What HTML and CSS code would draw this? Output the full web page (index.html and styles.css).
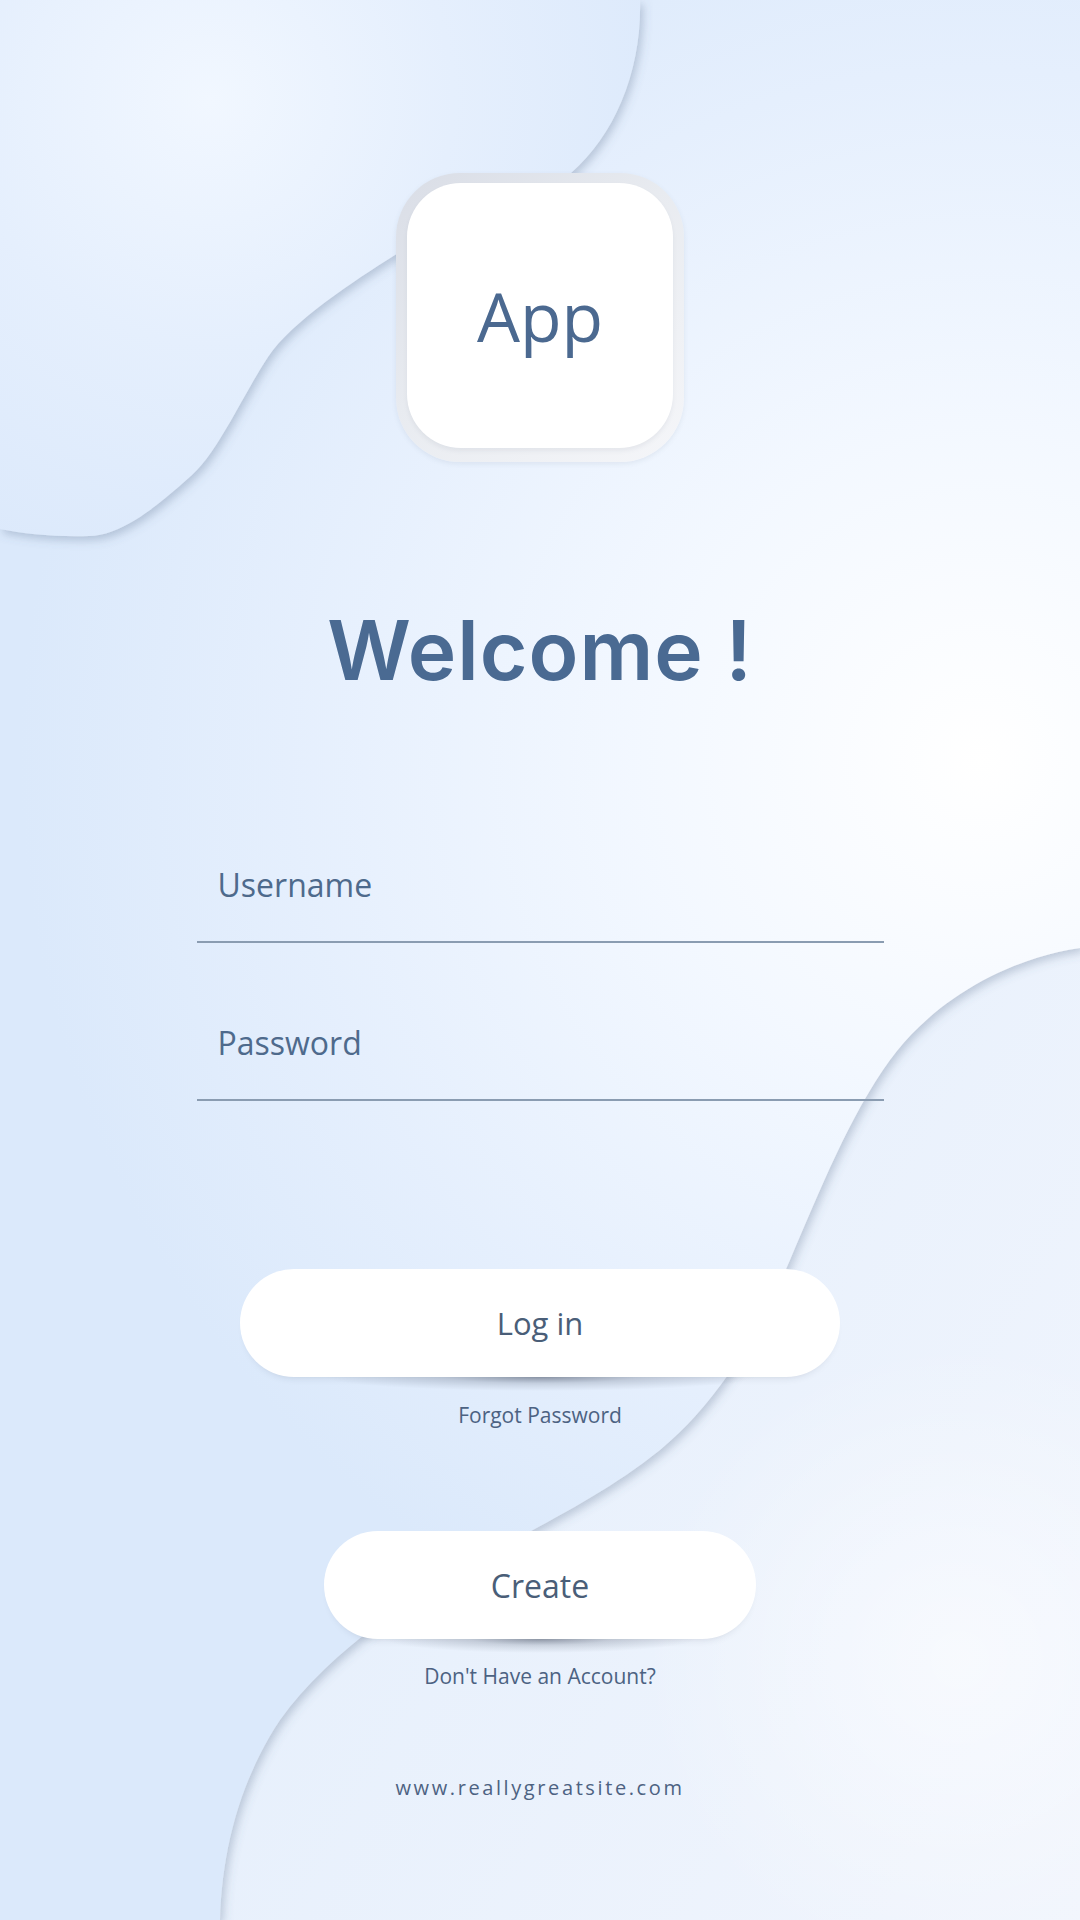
FILE: index.html
```html
<!DOCTYPE html>
<html lang="en">
<head>
<meta charset="utf-8">
<title>Welcome</title>
<link rel="stylesheet" href="styles.css">
</head>
<body>
<div class="screen">
  <svg class="bg" viewBox="0 0 1080 1920" width="1080" height="1920" aria-hidden="true">
    <defs>
      <linearGradient id="gBR" x1="0" y1="0" x2="1" y2="1">
        <stop offset="0" stop-color="#dde9fb"/>
        <stop offset="0.55" stop-color="#e7f0fc"/>
        <stop offset="1" stop-color="#f1f5fd"/>
      </linearGradient>
      <radialGradient id="gSpot" cx="960" cy="1660" r="320" gradientUnits="userSpaceOnUse">
        <stop offset="0" stop-color="#ffffff" stop-opacity="0.55"/>
        <stop offset="1" stop-color="#ffffff" stop-opacity="0"/>
      </radialGradient>
      <radialGradient id="gMid" cx="980" cy="760" r="960" gradientUnits="userSpaceOnUse">
        <stop offset="0" stop-color="#ffffff"/>
        <stop offset="0.35" stop-color="#f3f8ff"/>
        <stop offset="0.72" stop-color="#e5effd"/>
        <stop offset="1" stop-color="#dbe9fb"/>
      </radialGradient>
      <radialGradient id="gTL" cx="210" cy="100" r="540" gradientUnits="userSpaceOnUse">
        <stop offset="0" stop-color="#f1f7ff"/>
        <stop offset="0.45" stop-color="#e5effd"/>
        <stop offset="1" stop-color="#dae8fb"/>
      </radialGradient>
      <filter id="shadow" x="-10%" y="-10%" width="130%" height="130%">
        <feDropShadow dx="3" dy="4" stdDeviation="5" flood-color="#4f6685" flood-opacity="0.30"/>
      </filter>
    </defs>
    <rect x="0" y="0" width="1080" height="1920" fill="url(#gBR)"/>
    <rect x="0" y="0" width="1080" height="1920" fill="url(#gSpot)"/>
    <path filter="url(#shadow)" fill="url(#gMid)" d="M0,0 H1080 V948 C1000,960 930,1005 890,1060 C850,1115 820,1190 790,1260 C760,1330 720,1400 660,1450 C610,1490 560,1515 500,1548 C420,1590 330,1650 280,1720 C240,1780 222,1850 220,1920 H0 Z"/>
    <path filter="url(#shadow)" fill="url(#gTL)" d="M0,0 L640,0 C642,70 615,135 571,173 C527,211 436,229 395,255 C354,281 292,321 268,357 C244,393 218,452 192,475 C166,498 125,536 89,536 C55,537 25,534 0,529 Z"/>
  </svg>

  <main class="content">
    <div class="app-icon">
      <div class="app-icon-face">App</div>
    </div>

    <h1 class="welcome">Welcome !</h1>

    <form class="login-form">
      <div class="field">Username</div>
      <div class="field">Password</div>
    </form>

    <div class="btn btn-login">Log in</div>
    <p class="hint">Forgot Password</p>

    <div class="btn btn-create">Create</div>
    <p class="hint">Don't Have an Account?</p>

    <p class="site">www.reallygreatsite.com</p>
  </main>
</div>
</body>
</html>
```
FILE: styles.css
```css
html, body {
  margin: 0;
  padding: 0;
}

body {
  width: 1080px;
  height: 1920px;
  overflow: hidden;
  font-family: "Open Sans", "Noto Sans", sans-serif;
  background: #d8e7fb;
}

.screen {
  position: relative;
  width: 1080px;
  height: 1920px;
  overflow: hidden;
}

.bg {
  position: absolute;
  left: 0;
  top: 0;
  z-index: 0;
  display: block;
}

.content {
  position: relative;
  z-index: 1;
  display: flex;
  flex-direction: column;
  align-items: center;
  padding-top: 173px;
}

.app-icon {
  box-sizing: border-box;
  width: 288px;
  height: 289px;
  padding: 10px 11px 14px 11px;
  border-radius: 64px;
  background: linear-gradient(140deg, #d9dde6 0%, #e8ebf0 45%, #f5f6f9 100%);
  box-shadow: 0 2px 5px rgba(90, 105, 130, 0.10);
}

.app-icon-face {
  width: 100%;
  height: 100%;
  border-radius: 54px;
  background: #ffffff;
  display: flex;
  align-items: center;
  justify-content: center;
  font-size: 68px;
  line-height: 68px;
  color: #4b6990;
  box-shadow: 0 3px 4px rgba(120, 130, 150, 0.10);
}

.welcome {
  margin: 147px 0 0 0;
  font-family: Inter, "Liberation Sans", sans-serif;
  font-weight: 600;
  font-size: 82px;
  line-height: 84px;
  letter-spacing: 1px;
  color: #4a6a92;
}

.login-form {
  width: 687px;
  margin-top: 176px;
}

.field {
  padding: 0 0 40px 21px;
  font-size: 32px;
  line-height: 32px;
  color: #4e6a8c;
  border-bottom: 2px solid #8a9cb1;
}

.field + .field {
  margin-top: 84px;
}

.btn {
  position: relative;
  box-sizing: border-box;
  height: 108px;
  border-radius: 54px;
  background: #ffffff;
  display: flex;
  align-items: center;
  justify-content: center;
  font-size: 31px;
  line-height: 31px;
  color: #4a5e78;
  box-shadow: 0 6px 10px -8px rgba(35, 45, 65, 0.25);
}

.btn::after {
  content: "";
  position: absolute;
  left: 14%;
  right: 14%;
  top: 100%;
  height: 14px;
  background: radial-gradient(50% 100% at 50% 0%, rgba(35, 45, 65, 0.42) 0%, rgba(35, 45, 65, 0.15) 45%, rgba(35, 45, 65, 0) 100%);
  pointer-events: none;
}

.btn-login {
  width: 600px;
  margin-top: 168px;
}

.btn-create {
  width: 432px;
  margin-top: 105px;
  font-size: 32px;
}

.hint {
  margin: 28px 0 0 0;
  font-size: 21px;
  line-height: 21px;
  color: #4c6282;
}

.btn-create + .hint {
  margin-top: 27px;
}

.site {
  margin: 91px 0 0 0;
  font-size: 20px;
  line-height: 20px;
  letter-spacing: 2.6px;
  color: #4d6282;
}
```
